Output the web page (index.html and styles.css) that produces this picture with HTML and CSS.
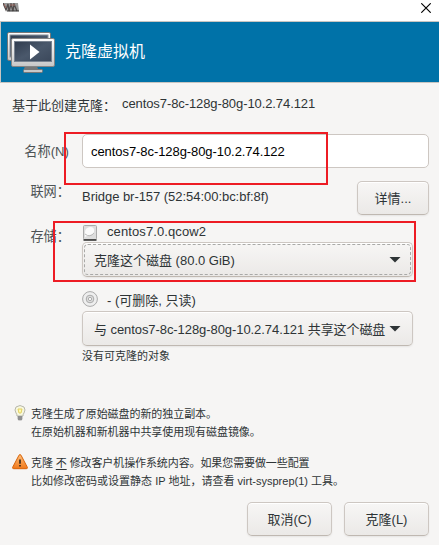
FILE: index.html
```html
<!DOCTYPE html>
<html lang="zh-CN">
<head>
<meta charset="utf-8">
<title>克隆虚拟机</title>
<link rel="stylesheet" href="styles.css">
</head>
<body>
<div class="window">
  <div class="titlebar">
    <svg class="app-icon" width="16" height="9" viewBox="0 0 16 9">
      <path d="M0 0h15l1 8H4z" fill="#999"/>
      <path d="M0 0l3 7 2-6 1 7 2-7 2 7 1-7 3 7" fill="none" stroke="#514b4b" stroke-width="1.3"/>
      <path d="M4 8h12" stroke="#333" stroke-width="1"/>
      <path d="M1 1l2 4M7 2h5" stroke="#9d6a63"/>
    </svg>
    <svg class="close" width="10" height="10" viewBox="0 0 10 10"><path d="M.3.3l9.4 9.4M9.7.3L.3 9.7" stroke="#000" stroke-width="1.15"/></svg>
  </div>
  <header class="banner">
    <svg class="screens" width="48" height="42" viewBox="0 0 48 42">
      <defs>
        <linearGradient id="frame" x2="0" y2="1"><stop stop-color="#fff"/><stop offset="1" stop-color="#c7c7c7"/></linearGradient>
        <linearGradient id="glass" x2="1" y2="1"><stop stop-color="#303c4e"/><stop offset=".5" stop-color="#4a586b"/><stop offset="1" stop-color="#3b485b"/></linearGradient>
      </defs>
      <rect x=".5" y=".5" width="43" height="28" rx="1.5" fill="url(#frame)" stroke="#777"/>
      <rect x="3" y="3" width="38" height="22" fill="url(#glass)" stroke="#89929c"/>
      <path d="M18 34h12l1 3H17z" fill="#777"/>
      <rect x="16.5" y="37.5" width="19" height="3" rx="1" fill="#c8c8c8" stroke="#777"/>
      <rect x="4.500" y="6.500" width="43" height="28" rx="1.500" fill="url(#frame)" stroke="#858585"/>
      <rect x="7.500" y="9.500" width="37" height="20" fill="url(#glass)" stroke="#798390"/>
      <path d="M23 12.500l9.500 7.500-9.500 7.500z" fill="#fff"/>
    </svg>
    <h1>克隆虚拟机</h1>
  </header>
  <main>
    <div class="source"><span class="source-label">基于此创建克隆：</span><span class="latin">centos7-8c-128g-80g-10.2.74.121</span></div>
    <div class="form">
      <label class="name-label">名称(N)</label>
      <div class="entry">centos7-8c-128g-80g-10.2.74.122</div>
      <label class="net-label">联网：</label>
      <div class="network"><span>Bridge br-157 (52:54:00:bc:bf:8f)</span><button class="details">详情...</button></div>
      <label class="storage-label">存储：</label>
      <div class="storage">
        <div class="device">
          <svg width="16" height="16" viewBox="0 0 16 16"><rect x="1.500" y=".5" width="13" height="14" rx="1" fill="#ddd" stroke="#aaa"/><path d="M1.500 15h13" stroke="#292929" stroke-width="1.500"/><path d="M3 12V7q0-4 5-5 5 0 4 5-1 3-5 3z" fill="#fafafa"/><path d="M3 9q5 4 9-1" fill="none" stroke="#bbb"/></svg>
          <span class="disk-name">centos7.0.qcow2</span>
        </div>
        <div class="combo focused"><span class="clone-disk">克隆这个磁盘 (80.0 GiB)</span><i class="arrow"></i></div>
        <div class="device optical">
          <svg width="16" height="16" viewBox="0 0 16 16"><circle cx="8" cy="8" r="7.400" fill="#eee" stroke="#aaa"/><circle cx="8" cy="8" r="3.800" fill="#ddd" stroke="#aaa"/><circle cx="8" cy="8" r="1.600" fill="#fff" stroke="#999" stroke-width=".8"/></svg>
          <span class="optical-name">- (可删除, 只读)</span>
        </div>
        <div class="combo"><span class="share-disk">与 centos7-8c-128g-80g-10.2.74.121 共享这个磁盘</span><i class="arrow"></i></div>
        <div class="none">没有可克隆的对象</div>
      </div>
    </div>
    <div class="tip">
      <svg width="16" height="16" viewBox="0 0 16 16"><path d="M5 11Q5 9 4 8 2 5 4 2 8-1 12 2q2 3 0 6-1 1-1 3z" fill="#f7f7de" stroke="#b7b7ac"/><path d="M6 4h4L9 8H7z" fill="#fffbb0" stroke="#e2cf61"/><path d="M5.500 11h5v3l-1 1.500h-3l-1-1.500z" fill="#aaa"/><path d="M6 12h4M6 14h4" stroke="#777"/></svg>
      <p>克隆生成了原始磁盘的新的独立副本。<br>在原始机器和新机器中共享使用现有磁盘镜像。</p>
    </div>
    <div class="tip warning">
      <svg width="16" height="16" viewBox="0 0 16 16"><defs><linearGradient id="warn" x2="0" y2="1"><stop stop-color="#ffc07c"/><stop offset="1" stop-color="#f0781a"/></linearGradient></defs><path d="M7 1.200Q8-.2 9 1.200l6.300 12q.5 1.500-1 1.500H1.700q-1.500 0-1-1.500z" fill="url(#warn)" stroke="#d76208"/><path d="M8 5.500v4.200M8 11v1.600" stroke="#3c2c1c" stroke-width="1.700"/></svg>
      <p><span class="warn-one">克隆 <span class="not">不</span> 修改客户机操作系统内容。如果您需要做一些配置</span><br><span class="warn-two">比如修改密码或设置静态 IP 地址，请查看 virt-sysprep(1) 工具。</span></p>
    </div>
    <footer><button>取消(C)</button><button>克隆(L)</button></footer>
  </main>
  <div class="mark mark-name"></div>
  <div class="mark mark-storage"></div>
</div>
</body>
</html>
```
FILE: styles.css
```css
* { box-sizing: border-box; }
body {
  margin: 0;
  color: #2e3436;
  font: 13px/18px "Liberation Sans", "Noto Sans CJK SC", sans-serif;
}
.window { position: relative; width: 439px; height: 545px; overflow: hidden; background: #f6f5f4; white-space: nowrap; }
.titlebar { display: flex; justify-content: space-between; height: 21px; padding: 3px 8px 0 3px; background: #fff; }
.banner { display: flex; height: 62px; padding: 10px 0 0 6px; gap: 10px; background: #0072a8; border: 1px solid #c8c5c1; border-width: 1px 0 1px 1px; }
h1 { margin: 10px 0 0; color: #fff; font-size: 16px; font-weight: 400; line-height: 20px; }
.source { display: flex; height: 51px; padding: 12px 0 0 12px; }
.source-label { width: 110px; margin-top: 2px; }
.latin { letter-spacing: -.09px; }
.form { display: grid; grid-template-columns: 70px 347px; column-gap: 12px; grid-template-rows: 47px 44px 171px; }
label { color: #4d5355; font-size: 13.2px; text-align: right; }
.name-label { padding-top: 9px; }
.net-label { padding-top: 2px; }
.storage-label { padding-top: 3px; }
.name-label { padding-right: 1px; }
.entry { height: 34px; padding: 8px; border: 1px solid #cdc7c2; border-radius: 5px; background: #fff; color: #000; letter-spacing: -.07px; }
.network { display: flex; justify-content: space-between; }
.network > span { padding-top: 7px; letter-spacing: -.04px; }
button, .combo {
  border: 1px solid #cdc7c2;
  border-bottom-color: #bfb8b1;
  border-radius: 5px;
  background: linear-gradient(#f7f6f5, #ebe9e7);
  box-shadow: 0 1px 2px rgba(0, 0, 0, .07), inset 0 1px #fff;
  color: #2e3436;
}
button { width: 85px; height: 34px; padding: 1px 0 0; font: inherit; font-size: 13px; }
.details { width: 72px; }
.device { display: flex; height: 17px; gap: 9px; }
.device svg { flex: none; }
.disk-name { margin-top: -2px; letter-spacing: .1px; }
.combo { position: relative; display: flex; align-items: center; justify-content: space-between; width: 331px; height: 35px; padding: 2px 11px 0; }
.share-disk { letter-spacing: -.07px; }
.focused::after { content: ""; position: absolute; inset: 1px; border: 1px dashed #a9a9a7; border-radius: 4px; }
.arrow { width: 12px; height: 6px; margin-top: -2px; background: #2e3436; clip-path: polygon(0 0, 100% 0, 50% 100%); }
.optical { height: 20px; margin-top: 14px; }
.optical-name { margin-top: 1px; }
.none { margin-top: 1px; font-size: 11px; }
.tip { display: flex; height: 49px; gap: 3px; margin-top: 9px; padding-left: 12px; font-size: 11px; line-height: 17.500px; letter-spacing: -.06px; }
.warning { height: 48px; margin-top: 0; }
.tip p { margin: 0; padding-top: 1px; }
.warn-one { letter-spacing: -.1px; }
.warn-two { letter-spacing: .01px; }
.not { text-decoration: underline; text-underline-offset: 2px; }
footer { display: flex; justify-content: flex-end; gap: 12px; padding-right: 10px; }
.mark { position: absolute; border: 2px solid #ed1c24; }
.mark-name { left: 64px; top: 132px; width: 264px; height: 53px; }
.mark-storage { left: 53px; top: 221px; width: 363px; height: 61px; }
```
